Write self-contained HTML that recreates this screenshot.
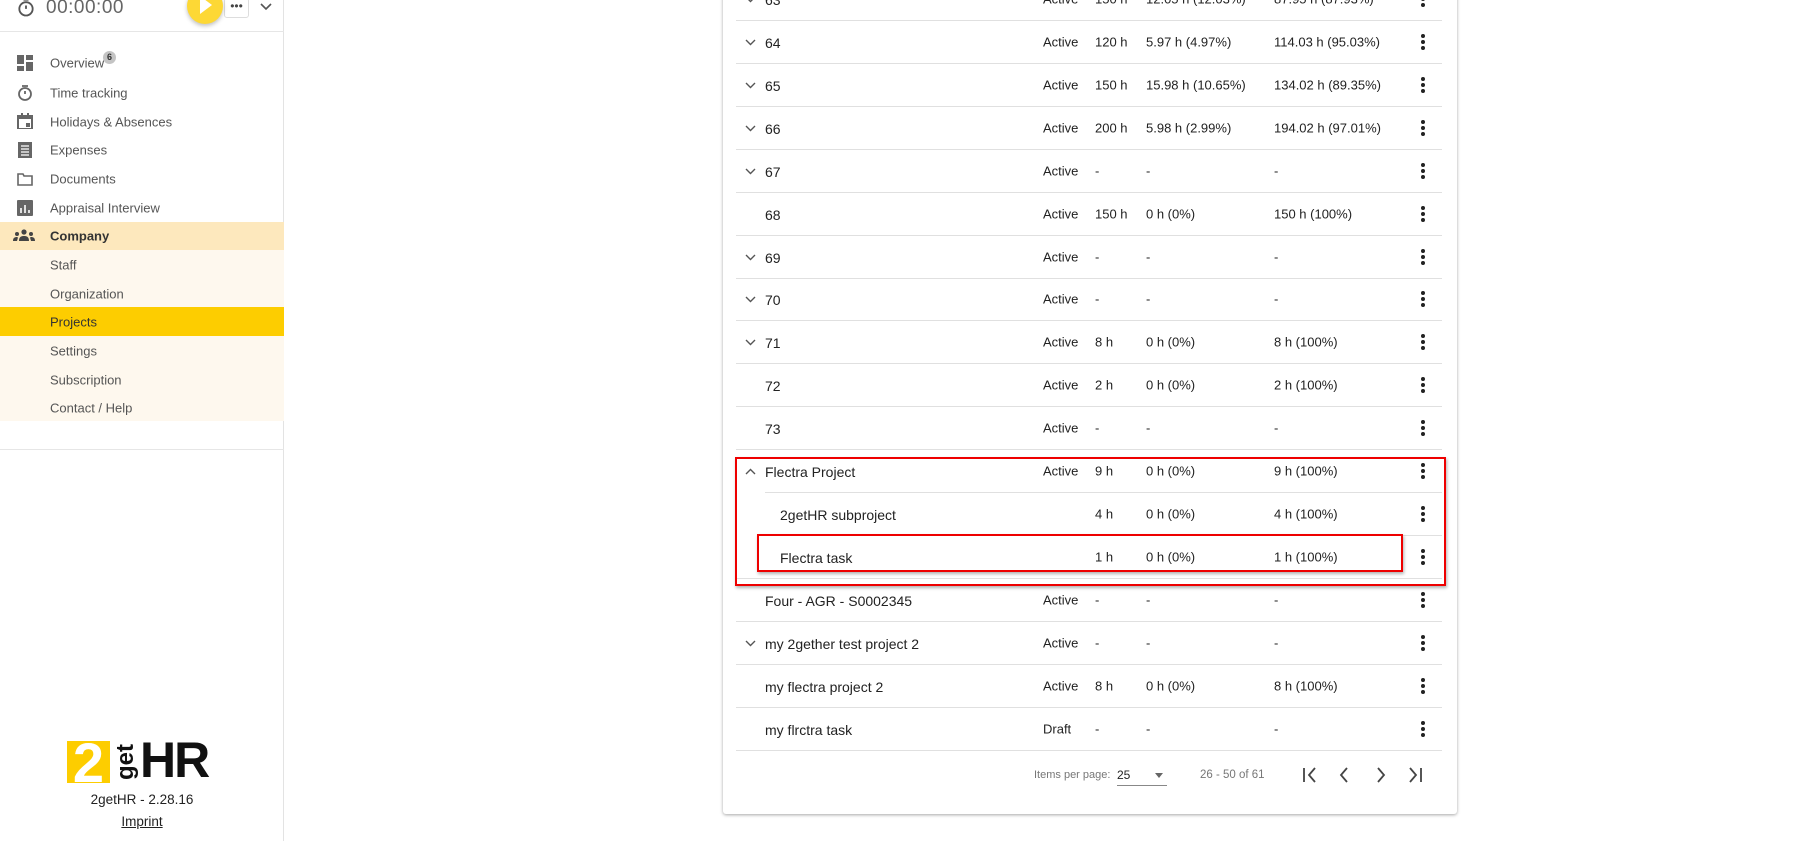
<!DOCTYPE html>
<html><head><meta charset="utf-8"><style>
*{margin:0;padding:0;box-sizing:border-box}
body{width:1816px;height:841px;overflow:hidden;background:#fff;font-family:"Liberation Sans",sans-serif;color:#222;position:relative}
.abs{position:absolute}
.side{left:0;top:0;width:284px;height:841px;border-right:1px solid #e3e3e3}
.mi{position:absolute;left:50px;font-size:13px;color:#555;transform:translateY(-50%)}
.ic{position:absolute;left:17px;width:16px;height:16px;transform:translateY(-50%)}
.t{position:absolute;font-size:13px;color:#222;transform:translateY(-50%);white-space:nowrap}
.nm{font-size:14px;margin-top:1px}
.ln{position:absolute;height:1px;background:#e0e0e0;right:374px}
.dots{position:absolute;left:1421px;width:4px;transform:translateY(-50%)}
.dots i{display:block;width:4px;height:4px;border-radius:2px;background:#222;margin:2px 0}
</style></head><body>
<div class="abs side">
 <div class="abs" style="left:0;top:31px;width:284px;height:1px;background:#e6e6e6"></div>
 <svg class="abs" style="left:16px;top:-2px" width="20" height="20" viewBox="0 0 24 24"><circle cx="12" cy="13" r="8" fill="none" stroke="#555" stroke-width="2.2"/><path d="M12 13V9M9 2h6" stroke="#555" stroke-width="2.2"/></svg>
 <div class="abs" style="left:46px;top:-3px;font-size:19px;color:#666;letter-spacing:.5px">00:00:00</div>
 <div class="abs" style="left:224px;top:-2px;width:25px;height:20px;border:1px solid #ddd;border-radius:3px;font-size:12px;text-align:center;line-height:14px;color:#444">•••</div>
 <div class="abs" style="left:187px;top:-12px;width:36px;height:36px;border-radius:18px;background:#fdd835;box-shadow:0 2px 4px rgba(0,0,0,.25)"></div>
 <svg class="abs" style="left:199px;top:-4px" width="14" height="18" viewBox="0 0 14 18"><path d="M1 0L13 9L1 18Z" fill="#fff"/></svg>
 <svg class="abs" style="left:260px;top:3px" width="12" height="8" viewBox="0 0 12 8"><path d="M1 1l5 5 5-5" stroke="#555" stroke-width="1.6" fill="none"/></svg>

 <div class="abs" style="left:0;top:222px;width:284px;height:28px;background:#fde8bd"></div>
 <div class="abs" style="left:0;top:250px;width:284px;height:171px;background:#fef8ee"></div>
 <div class="abs" style="left:0;top:307px;width:284px;height:29px;background:#fdcd00"></div>
 <div class="abs" style="left:0;top:449px;width:284px;height:1px;background:#e6e6e6"></div>

 <svg class="ic" style="top:63px" viewBox="0 0 16 16"><path d="M0 0h7v9H0zM9 0h7v5H9zM9 7h7v9H9zM0 11h7v5H0z" fill="#666"/></svg>
 <div class="mi" style="top:63px">Overview</div>
 <div class="abs" style="left:103px;top:51px;width:13px;height:13px;border-radius:7px;background:#c4c4c4;font-size:9px;font-weight:bold;text-align:center;line-height:13px;color:#333">6</div>
 <svg class="ic" style="top:93px" viewBox="0 0 16 16"><circle cx="8" cy="9" r="6" fill="none" stroke="#666" stroke-width="1.8"/><path d="M8 9V6M5 1h6" stroke="#666" stroke-width="1.8"/></svg>
 <div class="mi" style="top:93px">Time tracking</div>
 <svg class="ic" style="top:121px" viewBox="0 0 16 16"><path d="M1 3h14v13H1z" fill="none" stroke="#666" stroke-width="2"/><path d="M1 2h14v4H1zM4 0h2v3H4zM10 0h2v3h-2zM9 10h4v4H9z" fill="#666"/></svg>
 <div class="mi" style="top:122px">Holidays &amp; Absences</div>
 <svg class="ic" style="top:150px" viewBox="0 0 16 16"><path d="M1 0h14v16H1z" fill="#666"/><path d="M4 4h8M4 7h8M4 10h8M4 13h8" stroke="#fff" stroke-width="1.2"/></svg>
 <div class="mi" style="top:150px">Expenses</div>
 <svg class="ic" style="top:179px" viewBox="0 0 16 16"><path d="M1 3h5l1 2h8v9H1z" fill="none" stroke="#666" stroke-width="1.6"/></svg>
 <div class="mi" style="top:179px">Documents</div>
 <svg class="ic" style="top:208px" viewBox="0 0 16 16"><rect width="16" height="16" rx="1" fill="#666"/><path d="M4 13V8M8 13V5M12 13v-3" stroke="#fff" stroke-width="1.6"/></svg>
 <div class="mi" style="top:208px">Appraisal Interview</div>
 <svg class="abs" style="left:13px;top:229px" width="22" height="12" viewBox="0 0 22 12"><circle cx="11" cy="3" r="2.6" fill="#444"/><circle cx="4" cy="5" r="2" fill="#444"/><circle cx="18" cy="5" r="2" fill="#444"/><path d="M6 12c0-4 2-5 5-5s5 1 5 5zM0 12c0-3 1.5-4 4-4l1 .5-1 3.5zM22 12c0-3-1.5-4-4-4l-1 .5 1 3.5z" fill="#444"/></svg>
 <div class="mi" style="top:236px;color:#333;font-weight:bold">Company</div>
 <div class="mi" style="top:265px">Staff</div>
 <div class="mi" style="top:294px">Organization</div>
 <div class="mi" style="top:322px;color:#333">Projects</div>
 <div class="mi" style="top:351px">Settings</div>
 <div class="mi" style="top:380px">Subscription</div>
 <div class="mi" style="top:408px">Contact / Help</div>

 <div class="abs" style="left:67px;top:741px;width:43px;height:42px;background:#fdcd00;color:#fff;font-weight:bold;font-size:56px;line-height:44px;text-align:center;overflow:hidden">2</div>
 <div class="abs" style="left:112px;top:740px;width:28px;height:44px;"><div style="transform:rotate(-90deg) translate(-44px,0);transform-origin:0 0;font-weight:bold;font-size:24px;line-height:28px;color:#111;width:44px;text-align:center">get</div></div>
 <div class="abs" style="left:140px;top:731px;font-weight:bold;font-size:50px;color:#111;letter-spacing:-2px">HR</div>
 <div class="abs" style="left:0;width:284px;top:792px;text-align:center;font-size:13.5px;color:#222">2getHR - 2.28.16</div>
 <div class="abs" style="left:0;width:284px;top:814px;text-align:center;font-size:13.5px;color:#222"><span style="text-decoration:underline">Imprint</span></div>
</div>

<div class="abs" style="left:723px;top:-10px;width:734px;height:824px;background:#fff;box-shadow:0 1px 3px rgba(0,0,0,.35);border-radius:3px"></div>

<div id="rows"></div>
<script>
const rows=[
["63",1,"Active","150 h","12.05 h (12.03%)","87.95 h (87.93%)"],
["64",1,"Active","120 h","5.97 h (4.97%)","114.03 h (95.03%)"],
["65",1,"Active","150 h","15.98 h (10.65%)","134.02 h (89.35%)"],
["66",1,"Active","200 h","5.98 h (2.99%)","194.02 h (97.01%)"],
["67",1,"Active","-","-","-"],
["68",0,"Active","150 h","0 h (0%)","150 h (100%)"],
["69",1,"Active","-","-","-"],
["70",1,"Active","-","-","-"],
["71",1,"Active","8 h","0 h (0%)","8 h (100%)"],
["72",0,"Active","2 h","0 h (0%)","2 h (100%)"],
["73",0,"Active","-","-","-"],
["Flectra Project",2,"Active","9 h","0 h (0%)","9 h (100%)"],
["2getHR subproject",3,"","4 h","0 h (0%)","4 h (100%)"],
["Flectra task",3,"","1 h","0 h (0%)","1 h (100%)"],
["Four - AGR - S0002345",0,"Active","-","-","-"],
["my 2gether test project 2",1,"Active","-","-","-"],
["my flectra project 2",0,"Active","8 h","0 h (0%)","8 h (100%)"],
["my flrctra task",0,"Draft","-","-","-"]];
let h="";
rows.forEach((r,i)=>{
 const y=-1+i*42.92;
 const nx=r[1]==3?780:765;
 if(r[1]==1)h+=`<svg class="abs" style="left:745px;top:${y-3}px" width="11" height="7" viewBox="0 0 11 7"><path d="M1 1l4.5 4.5L10 1" stroke="#555" stroke-width="1.4" fill="none"/></svg>`;
 if(r[1]==2)h+=`<svg class="abs" style="left:745px;top:${y-3}px" width="11" height="7" viewBox="0 0 11 7"><path d="M1 6l4.5-4.5L10 6" stroke="#555" stroke-width="1.4" fill="none"/></svg>`;
 h+=`<div class="t nm" style="left:${nx}px;top:${y}px">${r[0]}</div>`;
 h+=`<div class="t" style="left:1043px;top:${y}px">${r[2]}</div>`;
 h+=`<div class="t" style="left:1095px;top:${y}px">${r[3]}</div>`;
 h+=`<div class="t" style="left:1146px;top:${y}px">${r[4]}</div>`;
 h+=`<div class="t" style="left:1274px;top:${y}px">${r[5]}</div>`;
 h+=`<div class="dots" style="top:${y}px"><i></i><i></i><i></i></div>`;
 const lx=(i==11||i==12)?765:736;
 h+=`<div class="ln" style="left:${lx}px;top:${y+21}px"></div>`;
});
document.getElementById("rows").innerHTML=h;
</script>

<div class="abs" style="left:735px;top:457px;width:711px;height:129px;border:2px solid #e00;box-shadow:1px 2px 3px rgba(0,0,0,.3)"></div>
<div class="abs" style="left:757px;top:534px;width:646px;height:38px;border:2px solid #e00;box-shadow:1px 2px 3px rgba(0,0,0,.3)"></div>

<div class="t" style="left:1034px;top:775px;font-size:11px;color:#777">Items per page:</div>
<div class="t" style="left:1117px;top:775px;font-size:12px">25</div>
<div class="abs" style="left:1117px;top:785px;width:50px;height:1px;background:#888"></div>
<div class="abs" style="left:1155px;top:773px;border-left:4px solid transparent;border-right:4px solid transparent;border-top:5px solid #666"></div>
<div class="t" style="left:1200px;top:775px;font-size:11.5px;color:#777">26 - 50 of 61</div>
<svg class="abs" style="left:1302px;top:766px" width="130" height="18" viewBox="0 0 130 18">
<g stroke="#444" stroke-width="1.8" fill="none"><path d="M2 2v14M13 2l-6 7 6 7"/><path d="M45 2l-6 7 6 7"/><path d="M76 2l6 7-6 7"/><path d="M108 2l6 7-6 7M119 2v14"/></g></svg>
</body></html>
